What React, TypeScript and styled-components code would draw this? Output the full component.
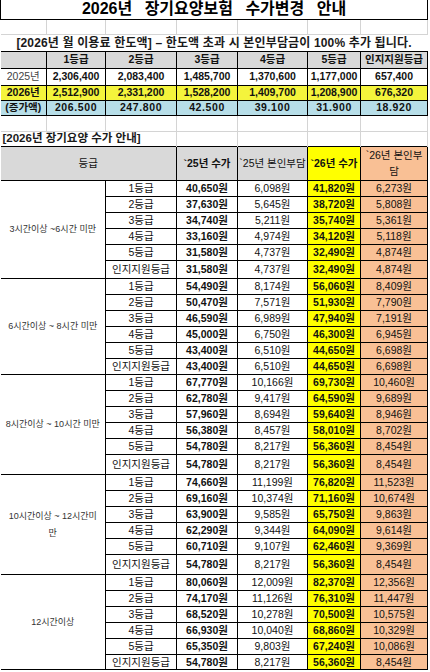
import styled, { createGlobalStyle } from 'styled-components';

const GlobalStyle = createGlobalStyle`
  body {
    margin: 0;
    background: #fff;
  }
`;

const COLS = [46, 59, 71, 61, 70, 53, 67];

const tones = {
  none: 'transparent',
  grey: '#d9d9d9',
  lemon: '#f4f43c',
  yellow: '#ffff00',
  blue: '#b7dee8',
  peach: '#f9c095',
};
type Tone = keyof typeof tones;

const Page = styled.div`
  width: 430px;
  height: 672px;
  overflow: hidden;
  background: #fff;
`;

const Sheet = styled.table`
  border-collapse: collapse;
  table-layout: fixed;
  width: 427px;
  font-family: 'Liberation Sans', 'Noto Sans CJK KR', sans-serif;
  font-size: 10.5px;
  line-height: 1;
  color: #111;
`;

const Row = styled.tr<{ $h: number }>`
  height: ${(p) => p.$h}px;
`;

const Cell = styled.td<{ $tone?: Tone; $bold?: boolean; $noLeft?: boolean }>`
  padding: 0 1px;
  border: 1px solid #000;
  border-left: ${(p) => (p.$noLeft ? 'none' : '1px solid #000')};
  text-align: center;
  vertical-align: middle;
  white-space: nowrap;
  line-height: 1;
  overflow: hidden;
  background: ${(p) => tones[p.$tone ?? 'none']};
  font-weight: ${(p) => (p.$bold ? 700 : 400)};
`;

const TitleCell = styled.td`
  border: 1px solid #000;
  border-top: none;
  text-align: center;
  font-size: 16px;
  font-weight: 700;
  word-spacing: 8px;
  line-height: 1;
  color: #000;
  padding: 0;
`;

const GridCell = styled.td<{ $bottom?: boolean }>`
  padding: 0;
  border-right: 1px solid #d4d4d4;
  border-bottom: ${(p) => (p.$bottom ? '1px solid #d4d4d4' : 'none')};
`;

const NoticeCell = styled.td`
  padding: 0;
  text-align: center;
  font-size: 12px;
  font-weight: 700;
  letter-spacing: 0.15px;
  line-height: 1;
  color: #1a1a1a;
  white-space: nowrap;
`;

const SectionCell = styled.td`
  padding: 0 0 0 2px;
  font-size: 11.5px;
  font-weight: 700;
  line-height: 1;
  color: #1a1a1a;
  white-space: nowrap;
  border-right: 1px solid #d4d4d4;
`;

const YearLabel = styled(Cell)<{ $dim?: boolean }>`
  color: ${(p) => (p.$dim ? '#444' : '#111')};
`;

const IncreaseCell = styled(Cell)`
  letter-spacing: 0.6px;
`;

const GroupCell = styled.td`
  border: 1px solid #000;
  border-left: none;
  text-align: center;
  vertical-align: middle;
  font-size: 9px;
  line-height: 1.9;
  color: #333;
  padding: 0;
  white-space: nowrap;
`;

const grades = ['1등급', '2등급', '3등급', '4등급', '5등급', '인지지원등급'];

const limits = {
  y2025: ['2,306,400', '2,083,400', '1,485,700', '1,370,600', '1,177,000', '657,400'],
  y2026: ['2,512,900', '2,331,200', '1,528,200', '1,409,700', '1,208,900', '676,320'],
  diff: ['206.500', '247.800', '42.500', '39.100', '31.900', '18.920'],
};

type Group = { label: string[]; lastH: number; rows: string[][] };

const groups: Group[] = [
  {
    label: ['3시간이상 ~6시간 미만'],
    lastH: 18,
    rows: [
      ['40,650원', '6,098원', '41,820원', '6,273원'],
      ['37,630원', '5,645원', '38,720원', '5,808원'],
      ['34,740원', '5,211원', '35,740원', '5,361원'],
      ['33,160원', '4,974원', '34,120원', '5,118원'],
      ['31,580원', '4,737원', '32,490원', '4,874원'],
      ['31,580원', '4,737원', '32,490원', '4,874원'],
    ],
  },
  {
    label: ['6시간이상 ~ 8시간 미만'],
    lastH: 16,
    rows: [
      ['54,490원', '8,174원', '56,060원', '8,409원'],
      ['50,470원', '7,571원', '51,930원', '7,790원'],
      ['46,590원', '6,989원', '47,940원', '7,191원'],
      ['45,000원', '6,750원', '46,300원', '6,945원'],
      ['43,400원', '6,510원', '44,650원', '6,698원'],
      ['43,400원', '6,510원', '44,650원', '6,698원'],
    ],
  },
  {
    label: ['8시간이상 ~ 10시간 미만'],
    lastH: 20,
    rows: [
      ['67,770원', '10,166원', '69,730원', '10,460원'],
      ['62,780원', '9,417원', '64,590원', '9,689원'],
      ['57,960원', '8,694원', '59,640원', '8,946원'],
      ['56,380원', '8,457원', '58,010원', '8,702원'],
      ['54,780원', '8,217원', '56,360원', '8,454원'],
      ['54,780원', '8,217원', '56,360원', '8,454원'],
    ],
  },
  {
    label: ['10시간이상 ~ 12시간미', '만'],
    lastH: 20,
    rows: [
      ['74,660원', '11,199원', '76,820원', '11,523원'],
      ['69,160원', '10,374원', '71,160원', '10,674원'],
      ['63,900원', '9,585원', '65,750원', '9,863원'],
      ['62,290원', '9,344원', '64,090원', '9,614원'],
      ['60,710원', '9,107원', '62,460원', '9,369원'],
      ['54,780원', '8,217원', '56,360원', '8,454원'],
    ],
  },
  {
    label: ['12시간이상'],
    lastH: 15,
    rows: [
      ['80,060원', '12,009원', '82,370원', '12,356원'],
      ['74,170원', '11,126원', '76,310원', '11,447원'],
      ['68,520원', '10,278원', '70,500원', '10,575원'],
      ['66,930원', '10,040원', '68,860원', '10,329원'],
      ['65,350원', '9,803원', '67,240원', '10,086원'],
      ['54,780원', '8,217원', '56,360원', '8,454원'],
    ],
  },
];

function GridRow({ h, bottom }: { h: number; bottom?: boolean }) {
  return (
    <Row $h={h}>
      {COLS.map((_, i) => (
        <GridCell key={i} $bottom={bottom} />
      ))}
    </Row>
  );
}

export default function App() {
  return (
    <Page>
      <GlobalStyle />
      <Sheet>
        <colgroup>
          {COLS.map((w, i) => (
            <col key={i} style={{ width: w }} />
          ))}
        </colgroup>
        <tbody>
          <Row $h={19}>
            <TitleCell colSpan={7}>2026년 장기요양보험 수가변경 안내</TitleCell>
          </Row>
          <GridRow h={15} bottom />
          <Row $h={17}>
            <NoticeCell colSpan={7}>
              [2026년 월 이용료 한도액] – 한도액 초과 시 본인부담금이 100% 추가 됩니다.
            </NoticeCell>
          </Row>
          <Row $h={17}>
            <Cell $tone="grey" $noLeft />
            {grades.map((g) => (
              <Cell key={g} $tone="grey" $bold>
                {g}
              </Cell>
            ))}
          </Row>
          <Row $h={17}>
            <YearLabel $noLeft $dim>
              2025년
            </YearLabel>
            {limits.y2025.map((v, i) => (
              <Cell key={i} $bold>
                {v}
              </Cell>
            ))}
          </Row>
          <Row $h={15}>
            <YearLabel $noLeft $bold $tone="lemon">
              2026년
            </YearLabel>
            {limits.y2026.map((v, i) => (
              <Cell key={i} $bold $tone="lemon">
                {v}
              </Cell>
            ))}
          </Row>
          <Row $h={15}>
            <Cell $noLeft $bold $tone="blue">
              (증가액)
            </Cell>
            {limits.diff.map((v, i) => (
              <IncreaseCell key={i} $bold $tone="blue">
                {v}
              </IncreaseCell>
            ))}
          </Row>
          <GridRow h={16} bottom />
          <Row $h={15}>
            <SectionCell colSpan={3}>[2026년 장기요양 수가 안내]</SectionCell>
            <GridCell />
            <GridCell />
            <GridCell />
            <GridCell />
          </Row>
          <Row $h={29}>
            <Cell colSpan={3} $tone="grey" $noLeft>
              등급
            </Cell>
            <Cell $tone="grey" $bold>
              `25년 수가
            </Cell>
            <Cell $tone="grey">`25년 본인부담</Cell>
            <Cell $tone="yellow" $bold>
              `26년 수가
            </Cell>
            <Cell $tone="peach" style={{ lineHeight: 1.6 }}>
              `26년 본인부
              <br />담
            </Cell>
          </Row>
          {groups.map((g) =>
            g.rows.map((r, i) => (
              <Row key={g.label[0] + i} $h={i === 5 ? g.lastH : 16}>
                {i === 0 && (
                  <GroupCell rowSpan={6} colSpan={2}>
                    {g.label.map((l, k) => (
                      <div key={k}>{l}</div>
                    ))}
                  </GroupCell>
                )}
                <Cell>{grades[i]}</Cell>
                <Cell $bold>{r[0]}</Cell>
                <Cell>{r[1]}</Cell>
                <Cell $bold $tone="yellow">
                  {r[2]}
                </Cell>
                <Cell $tone="peach">{r[3]}</Cell>
              </Row>
            ))
          )}
        </tbody>
      </Sheet>
    </Page>
  );
}
